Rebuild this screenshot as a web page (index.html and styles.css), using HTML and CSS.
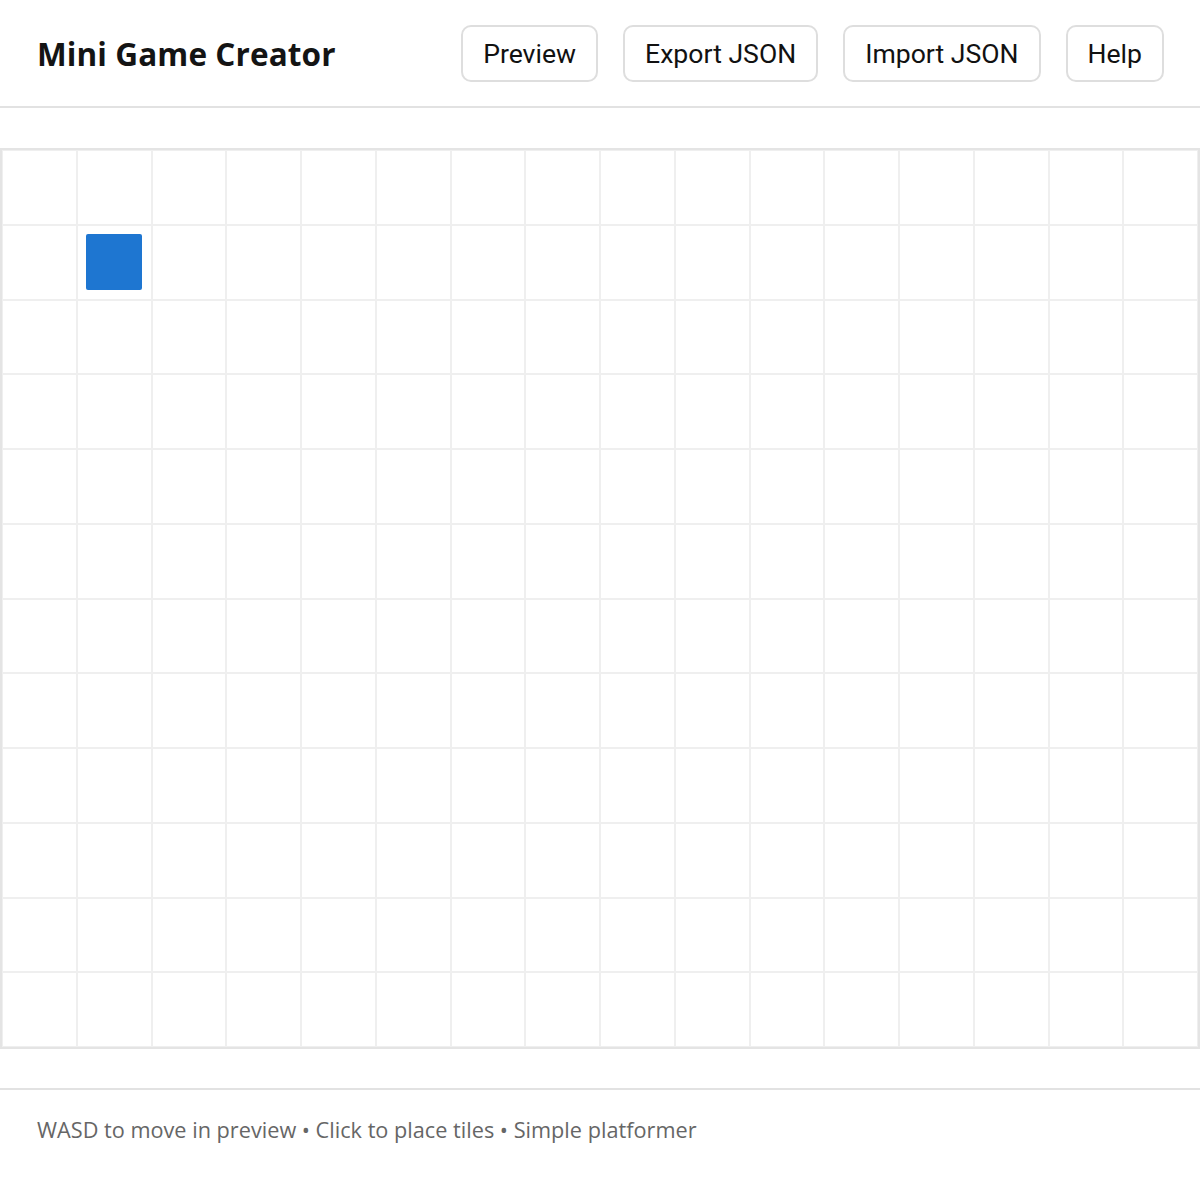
FILE: index.html
```html
<!DOCTYPE html>
<html lang="en">
<head>
<meta charset="utf-8">
<title>Mini Game Creator</title>
<link rel="stylesheet" href="styles.css">
</head>
<body>
<header class="topbar">
  <h1 class="app-title">Mini Game Creator</h1>
  <nav class="actions">
    <button class="btn">Preview</button>
    <button class="btn">Export JSON</button>
    <button class="btn">Import JSON</button>
    <button class="btn">Help</button>
  </nav>
</header>
<main class="stage">
  <div class="board" id="board"></div>
</main>
<footer class="hint">WASD to move in preview • Click to place tiles • Simple platformer</footer>
<script src="app.js"></script>
</body>
</html>
```
FILE: styles.css
```css
* { box-sizing: border-box; }

html, body {
  margin: 0;
  background: #fff;
}

body {
  font-family: "Open Sans", "Liberation Sans", sans-serif;
  color: #111;
}

.topbar {
  height: 108px;
  display: flex;
  align-items: center;
  justify-content: space-between;
  padding: 0 36px 0 37px;
  border-bottom: 2px solid #e2e2e2;
}

.app-title {
  margin: 0;
  font-size: 31.5px;
  font-weight: 700;
  color: #141414;
  letter-spacing: 0.1px;
}

.actions {
  display: flex;
  gap: 25px;
}

.btn {
  height: 57px;
  padding: 0 20px;
  border: 2px solid #dedede;
  border-radius: 10px;
  background: #fff;
  font-family: Roboto, "Liberation Sans", sans-serif;
  font-size: 26.6px;
  color: #111;
  cursor: pointer;
}

.stage {
  padding: 40px 0 39px;
}

.board {
  display: grid;
  grid-template-columns: repeat(16, 1fr);
  border: 2px solid #e4e4e4;
}

.cell {
  aspect-ratio: 1 / 1;
  border: 1px solid #efefef;
  display: flex;
  align-items: center;
  justify-content: center;
}

.tile-player {
  width: 56px;
  height: 56px;
  background: #1e76d1;
  border-radius: 2px;
}

.hint {
  border-top: 2px solid #e2e2e2;
  padding: 25px 37px 40px;
  font-size: 21.7px;
  line-height: 30px;
  color: #666;
}
```
FILE: app.js
```js
// Build the 16x12 level grid and place the player start tile.
const board = document.getElementById('board');
const COLS = 16, ROWS = 12;
for (let r = 0; r < ROWS; r++) {
  for (let c = 0; c < COLS; c++) {
    const cell = document.createElement('div');
    cell.className = 'cell';
    if (r === 1 && c === 1) {
      const p = document.createElement('div');
      p.className = 'tile-player';
      cell.appendChild(p);
    }
    board.appendChild(cell);
  }
}
```
